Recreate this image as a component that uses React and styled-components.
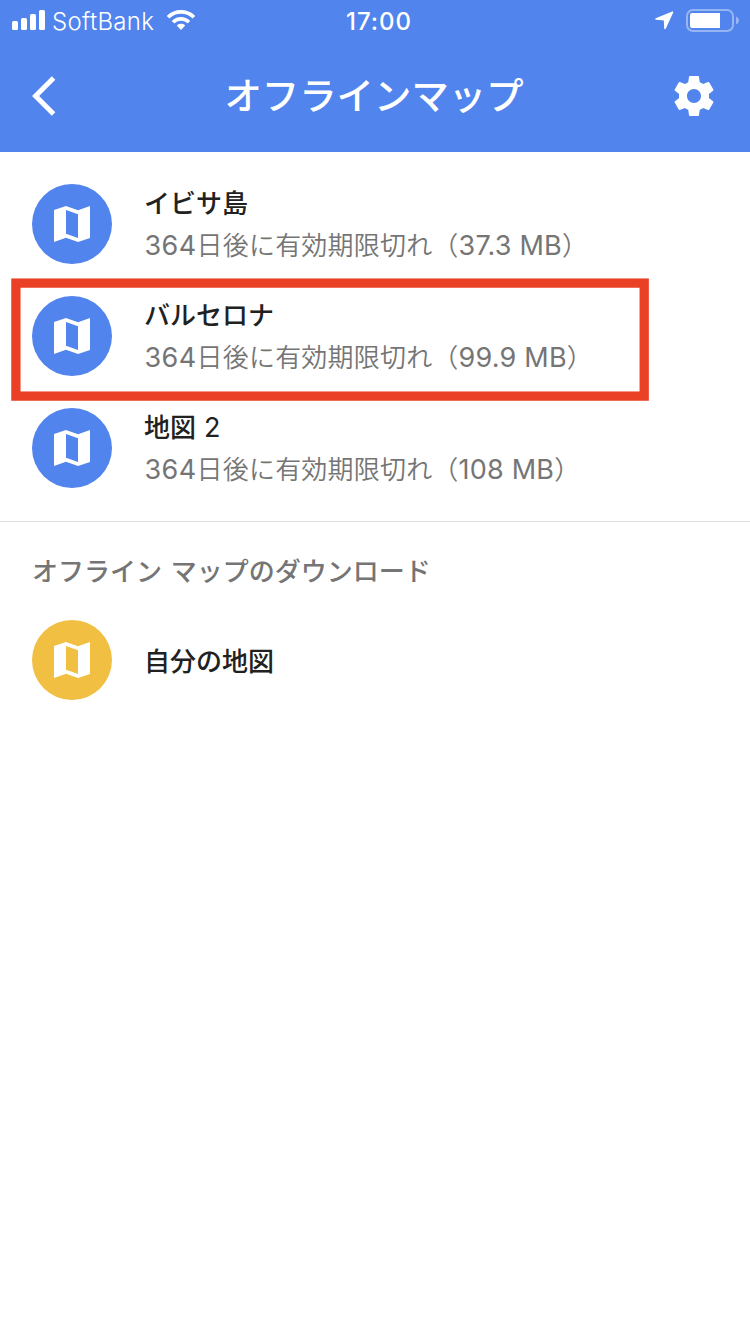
import React from "react";
import styled, { createGlobalStyle } from "styled-components";

const maps = [
  { name: "イビサ島", size: "37.3 MB" },
  { name: "バルセロナ", size: "99.9 MB", marked: true },
  { name: "地図", number: " 2", size: "108 MB" },
];

const MapIcon = () => (
  <svg width="48" height="48" viewBox="0 0 24 24" fill="#fff">
    <path
      fillRule="evenodd"
      d="M3 5l6-2 6 2.1L21 3v16l-6 2-6-2.1L3 21zM9 5v11.9l6 2.1V7.1z"
    />
  </svg>
);

const App = () => {
  return (
    <Screen>
      <GlobalStyle />
      <StatusBar>
        <Carrier>
          <svg width="34" height="20" viewBox="0 0 34 20" fill="#fff">
            <rect x="0" y="11" width="6" height="9" rx="1.5" />
            <rect x="9" y="8" width="6" height="12" rx="1.5" />
            <rect x="18" y="4" width="6" height="16" rx="1.5" />
            <rect x="27" y="0" width="6" height="20" rx="1.5" />
          </svg>
          <span>SoftBank</span>
          <svg width="28" height="20" viewBox="0 0 28 20" fill="#fff">
            <path d="M14 0c5.3 0 10.2 2 13.8 5.4.3.3.3.7 0 1l-1.7 1.7c-.3.3-.7.3-1 0A16 16 0 0 0 14 3.8 16 16 0 0 0 2.9 8.1c-.3.3-.7.3-1 0L.2 6.4c-.3-.3-.3-.7 0-1A20 20 0 0 1 14 0z" />
            <path d="M14 7c3.4 0 6.5 1.3 8.8 3.4.3.3.3.7 0 1l-1.700 1.700c-.3.3-.7.3-1 0A9 9 0 0 0 14 10.700a9 9 0 0 0-6.100 2.400c-.3.3-.7.3-1 0l-1.700-1.700c-.3-.3-.3-.7 0-1A13 13 0 0 1 14 7z" />
            <path d="M14 13.8c1.5 0 2.8.5 3.8 1.3.3.3.3.7 0 1l-3.300 3.400c-.3.3-.7.3-1 0l-3.300-3.400c-.3-.3-.3-.7 0-1A6 6 0 0 1 14 13.800z" />
          </svg>
        </Carrier>
        <Clock>17:00</Clock>
        <Power>
          <svg width="20" height="20" viewBox="0 0 20 20" fill="#fff">
            <path
              d="M18.5 2.2L2 9l8.600.6L11 18.500z"
              stroke="#fff"
              strokeWidth="1.6"
              strokeLinejoin="round"
            />
          </svg>
          <svg width="53" height="24" viewBox="0 0 53 24">
            <rect
              x="1"
              y="2"
              width="46"
              height="21"
              rx="6"
              fill="none"
              stroke="#fff"
              strokeOpacity=".4"
              strokeWidth="2"
            />
            <path d="M6 5h28v15H6a2 2 0 0 1-2-2V7a2 2 0 0 1 2-2z" fill="#fff" />
            <path d="M50 8.5c4 1.5 4 6.500 0 8z" fill="#fff" fillOpacity=".4" />
          </svg>
        </Power>
      </StatusBar>
      <Header>
        <svg width="48" height="48" viewBox="0 0 24 24" fill="#fff">
          <path d="M11.67 3.87L9.9 2.1 0 12l9.9 9.9 1.77-1.77L3.54 12z" />
        </svg>
        <h1>オフラインマップ</h1>
        <svg width="48" height="48" viewBox="0 0 24 24" fill="#fff">
          <path d="M19.43 12.98c.04-.32.07-.64.07-.98s-.03-.66-.07-.98l2.11-1.65c.19-.15.24-.42.12-.64l-2-3.46c-.12-.22-.39-.3-.61-.22l-2.49 1c-.52-.4-1.08-.73-1.69-.98l-.38-2.65C14.46 2.18 14.25 2 14 2h-4c-.25 0-.46.18-.49.42l-.38 2.65c-.61.25-1.17.59-1.69.98l-2.49-1c-.23-.09-.49 0-.61.22l-2 3.46c-.13.22-.07.49.12.64l2.11 1.65c-.04.32-.07.65-.07.98s.03.66.07.98l-2.11 1.65c-.19.15-.24.42-.12.64l2 3.46c.12.22.39.3.61.22l2.49-1c.52.4 1.08.73 1.69.98l.38 2.65c.03.24.24.42.49.42h4c.25 0 .46-.18.49-.42l.38-2.65c.61-.25 1.17-.59 1.69-.98l2.49 1c.23.09.49 0 .61-.22l2-3.46c.12-.22.07-.49-.12-.64l-2.11-1.65zM12 15.5c-1.93 0-3.5-1.57-3.5-3.5s1.57-3.5 3.5-3.5 3.5 1.57 3.5 3.5-1.57 3.5-3.5 3.5z" />
        </svg>
      </Header>
      <List>
        {maps.map((map) => (
          <Row key={map.size}>
            <Circle $color="#5184ec">
              <MapIcon />
            </Circle>
            <Texts>
              <Name>
                {map.name}
                {map.number && <Latin>{map.number}</Latin>}
              </Name>
              <Detail>
                <Latin>364</Latin>日後に有効期限切れ（
                <Latin $spacing="0.2px">{map.size}</Latin>）
              </Detail>
            </Texts>
            {map.marked && (
              <Marker width="640" height="124" viewBox="0 0 640 124">
                <rect x="5.9" y="5.1" width="628.3" height="113" />
              </Marker>
            )}
          </Row>
        ))}
      </List>
      <SectionTitle>オフライン マップのダウンロード</SectionTitle>
      <Row>
        <Circle $color="#f1bf42">
          <MapIcon />
        </Circle>
        <Name>自分の地図</Name>
      </Row>
    </Screen>
  );
};

const GlobalStyle = createGlobalStyle`
  * {
    box-sizing: border-box;
    margin: 0;
    padding: 0;
  }
  body {
    background: #fff;
    font-family: "Inter", "Noto Sans CJK JP", sans-serif;
  }
  svg {
    display: block;
    flex-shrink: 0;
  }
`;

const Screen = styled.main`
  width: 750px;
  min-height: 1334px;
  background: #fff;
`;

const StatusBar = styled.div`
  height: 40px;
  padding: 0 11px 0 12px;
  display: grid;
  grid-template-columns: 1fr auto 1fr;
  align-items: center;
  background: #5184ec;
  color: #fff;
  font-size: 24px;
`;

const Carrier = styled.div`
  display: flex;
  align-items: center;
  span {
    width: 102px;
    margin: 0 13px 0 6px;
    padding-top: 2px;
    font-size: 24px;
    font-weight: 350;
    letter-spacing: 0.3px;
  }
`;

const Clock = styled.div`
  padding: 2px 0 0 7px;
  font-weight: 500;
  letter-spacing: 1px;
`;

const Power = styled.div`
  display: flex;
  align-items: center;
  justify-content: flex-end;
  gap: 12px;
`;

const Header = styled.header`
  height: 112px;
  padding: 0 32px;
  display: flex;
  align-items: center;
  justify-content: space-between;
  background: #5184ec;
  color: #fff;
  h1 {
    padding: 0 2px 4px 0;
    font-family: "Noto Sans CJK JP", sans-serif;
    font-size: 37.4px;
    font-weight: 500;
  }
`;

const List = styled.section`
  padding: 16px 0 17px;
  border-bottom: 1px solid #e0e0e0;
`;

const Row = styled.div`
  position: relative;
  height: 112px;
  padding: 0 32px;
  display: flex;
  align-items: center;
  gap: 32px;
`;

const Circle = styled.div`
  width: 80px;
  height: 80px;
  flex-shrink: 0;
  display: flex;
  align-items: center;
  justify-content: center;
  border-radius: 50%;
  background: ${(props) => props.$color};
`;

const Texts = styled.div`
  padding-bottom: 2px;
`;

const Name = styled.h2`
  font-family: "Noto Sans CJK JP", sans-serif;
  font-size: 26px;
  font-weight: 500;
  line-height: 42px;
  color: #212121;
`;

const Detail = styled.p`
  padding-left: 0.5px;
  font-family: "Noto Sans CJK JP", sans-serif;
  font-size: 26px;
  font-weight: 350;
  line-height: 42px;
  letter-spacing: 0.2px;
  color: #757575;
  white-space: nowrap;
`;

const Latin = styled.span`
  font-family: "Inter", sans-serif;
  font-size: 27px;
  font-weight: 400;
  line-height: 1;
  letter-spacing: ${(props) => props.$spacing || "0.4px"};
  white-space: pre;
`;

/* red frame around one of the rows */
const Marker = styled.svg`
  position: absolute;
  top: -2px;
  left: 10px;
  fill: none;
  stroke: #ea4025;
  stroke-width: 9.3px;
`;

const SectionTitle = styled.h3`
  height: 82px;
  padding: 27px 32px 0;
  font-family: "Noto Sans CJK JP", sans-serif;
  font-size: 26px;
  font-weight: 500;
  line-height: 42px;
  word-spacing: 3px;
  color: #757575;
`;

export default App;
